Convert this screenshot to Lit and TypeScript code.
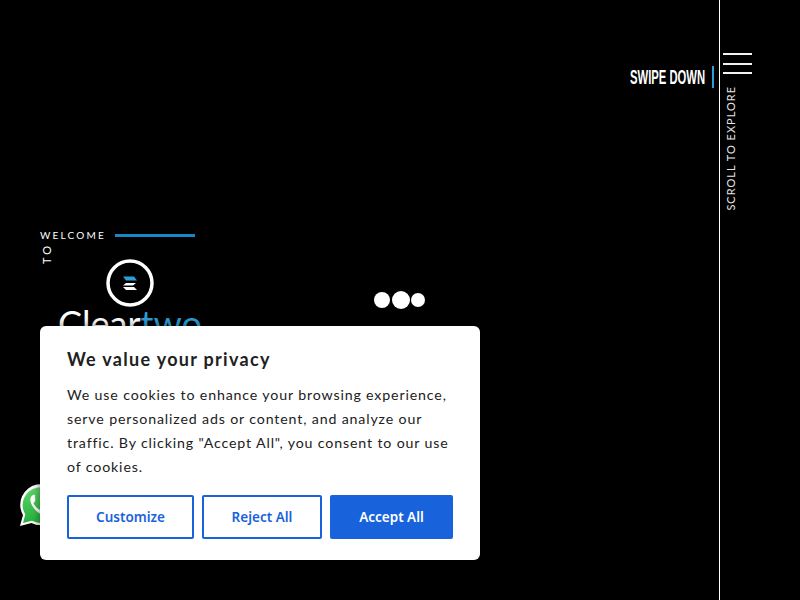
import { LitElement, html, css } from 'lit';
import { customElement } from 'lit/decorators.js';

@customElement('app-root')
export class AppRoot extends LitElement {
  static styles = css`
    * {
      box-sizing: border-box;
    }
    :host {
      display: block;
      width: 800px;
      height: 600px;
      position: relative;
      overflow: hidden;
      background: #000;
      color: #fff;
      font-family: "Lato", sans-serif;
    }
    .page {
      display: flex;
      height: 600px;
    }
    .main {
      width: 719px;
      display: flex;
      flex-direction: column;
    }
    .swipe {
      display: flex;
      justify-content: flex-end;
      align-items: center;
      gap: 7px;
      margin-top: 66px;
      padding-right: 5px;
      height: 22px;
    }
    .swipe-text {
      width: 75px;
      font-family: "Liberation Sans", sans-serif;
      font-weight: 700;
      font-size: 20px;
      white-space: nowrap;
      transform: scaleX(0.563);
      transform-origin: left center;
    }
    .swipe-bar {
      width: 2px;
      height: 22px;
      background: #2a9fd8;
    }
    .hero {
      margin-top: 140px;
      padding-left: 40px;
    }
    .welcome {
      display: flex;
      align-items: center;
      gap: 9px;
      height: 14px;
      font-size: 10px;
      letter-spacing: 2.2px;
      color: #fff;
    }
    .welcome-bar {
      width: 80px;
      height: 3px;
      background: #1a86c8;
    }
    .to {
      writing-mode: vertical-rl;
      transform: rotate(180deg);
      font-size: 11px;
      letter-spacing: 3px;
      color: #fff;
      margin-top: 4px;
      height: 18px;
      width: 11px;
    }
    .logo {
      width: 140px;
      margin: -5px 0 0 20px;
      display: flex;
      flex-direction: column;
      align-items: center;
    }
    .logo svg {
      display: block;
    }
    .brand {
      font-family: "Lato", sans-serif;
      font-weight: 400;
      font-size: 36px;
      line-height: 40px;
      margin-top: -4px;
      white-space: nowrap;
    }
    .brand span {
      color: #2a9fd8;
    }
    .rail {
      width: 81px;
      border-left: 1px solid #fff;
      padding: 53px 0 0 3px;
      display: flex;
      flex-direction: column;
    }
    .menu {
      width: 29px;
      display: flex;
      flex-direction: column;
      gap: 7.5px;
    }
    .menu i {
      display: block;
      height: 2px;
      background: #f2f2f2;
    }
    .scroll {
      writing-mode: vertical-rl;
      transform: rotate(180deg);
      margin: 12px 0 0 1px;
      font-size: 11px;
      letter-spacing: 1px;
      color: #e4e4e4;
      white-space: nowrap;
      align-self: flex-start;
    }
    .dots {
      position: absolute;
      left: 374px;
      top: 291px;
      display: flex;
      align-items: center;
      gap: 1.5px;
    }
    .dots i {
      display: block;
      border-radius: 50%;
      background: #fff;
    }
    .whatsapp {
      position: absolute;
      left: 19px;
      top: 484px;
    }
    .consent {
      position: absolute;
      left: 40px;
      top: 326px;
      width: 440px;
      height: 234px;
      padding: 21px 27px;
      background: #fff;
      border-radius: 6px;
      box-shadow: 0 0 10px rgba(0, 0, 0, 0.5);
      color: #212121;
    }
    .consent-title {
      margin: 0 0 12px;
      font-size: 18px;
      line-height: 24px;
      font-weight: 700;
      letter-spacing: 1.3px;
    }
    .consent-text {
      margin: 0;
      font-size: 14.2px;
      line-height: 24px;
      letter-spacing: 0.85px;
    }
    .actions {
      display: flex;
      gap: 8px;
      margin-top: 16px;
    }
    .btn {
      height: 44px;
      border: 2px solid #1863dc;
      border-radius: 2px;
      background: #fff;
      color: #1863dc;
      font-family: "Noto Sans", sans-serif;
      font-size: 13.5px;
      font-weight: 600;
      padding: 0;
    }
    .customize {
      width: 127px;
    }
    .reject {
      width: 120px;
    }
    .accept {
      width: 123px;
      background: #1863dc;
      color: #fff;
    }
  `;

  render() {
    return html`
      <div class="page">
        <div class="main">
          <div class="swipe">
            <span class="swipe-text">SWIPE DOWN</span>
            <span class="swipe-bar"></span>
          </div>
          <div class="hero">
            <div class="welcome">WELCOME <span class="welcome-bar"></span></div>
            <div class="to">TO</div>
            <div class="logo">
              <svg width="48" height="48" viewBox="0 0 48 48">
                <circle cx="24" cy="24" r="22" fill="none" stroke="#fff" stroke-width="3.500"></circle>
                <path d="M17 17.500h11l3 4h-11z" fill="#2a9fd8"></path>
                <path d="M20 24h10l-3 2.500h-10z" fill="#fff"></path>
                <path d="M17 28h11l3 3h-11z" fill="#fff"></path>
              </svg>
              <div class="brand">Clear<span>two</span></div>
            </div>
          </div>
        </div>
        <div class="rail">
          <div class="menu"><i></i><i></i><i></i></div>
          <div class="scroll">SCROLL TO EXPLORE</div>
        </div>
      </div>

      <div class="dots">
        <i style="width:16px;height:16px"></i>
        <i style="width:18px;height:18px"></i>
        <i style="width:14px;height:14px"></i>
      </div>

      <svg class="whatsapp" width="44" height="44" viewBox="0 0 44 44">
        <defs>
          <linearGradient id="wa" x1="0" y1="0" x2="0" y2="1">
            <stop offset="0" stop-color="#5fd568"></stop>
            <stop offset="1" stop-color="#27b13f"></stop>
          </linearGradient>
        </defs>
        <path d="M1 42l3-11A20.500 20.500 0 1 1 12.500 39z" fill="#fff"></path>
        <path d="M4 39l2.300-8.500A17.800 17.800 0 1 1 13 36.800z" fill="url(#wa)"></path>
        <path d="M16 11c-1-.4-2-.3-3 .8-2 2-2.500 5 0 9.500 2.500 4.500 6 8 11 9.500 3 .8 5.500-.8 6.500-3 .4-1 .2-1.800-.5-2.200l-4-2c-.8-.3-1.300 0-1.800.7l-1.200 1.500c-.5.500-1 .5-1.700.2-3-1.300-5-3.500-6.500-6-.3-.7-.2-1 .2-1.500l1-1.300c.4-.5.4-1 .2-1.500z" fill="#fff"></path>
      </svg>

      <div class="consent">
        <h2 class="consent-title">We value your privacy</h2>
        <p class="consent-text">We use cookies to enhance your browsing experience, serve personalized ads or content, and analyze our traffic. By clicking "Accept All", you consent to our use of cookies.</p>
        <div class="actions">
          <button class="btn customize">Customize</button>
          <button class="btn reject">Reject All</button>
          <button class="btn accept">Accept All</button>
        </div>
      </div>
    `;
  }
}
